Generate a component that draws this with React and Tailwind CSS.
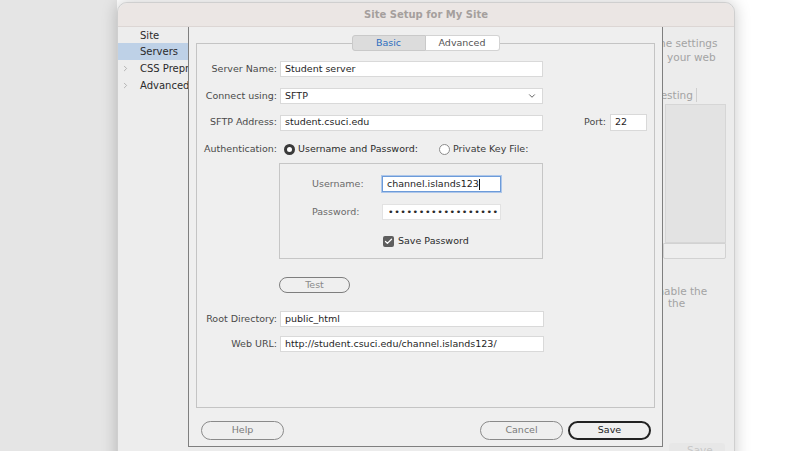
import { ChevronDown, ChevronRight, Check } from 'lucide-react'

const sidebarItems = [
  { label: 'Site' },
  { label: 'Servers', active: true },
  { label: 'CSS Preprocessors', expandable: true },
  { label: 'Advanced Settings', expandable: true },
]

function Field({ value, className = '' }) {
  return (
    <div className={`h-[16px] bg-white border border-[#d9d9d9] pl-[4px] flex items-center text-[#1e1e1e] ${className}`}>
      {value}
    </div>
  )
}

function Row({ label, children, className = '' }) {
  return (
    <div className={`flex items-center ${className}`}>
      <span className="w-[80px] shrink-0 text-right text-[#4a4a4a]">{label}</span>
      <div className="ml-[3px] flex items-center">{children}</div>
    </div>
  )
}

function Radio({ checked }) {
  return checked ? (
    <span className="w-[11px] h-[11px] rounded-full border-[3px] border-[#3a3a3a] bg-white shrink-0" />
  ) : (
    <span className="w-[11px] h-[11px] rounded-full border border-[#8c8c8c] bg-white shrink-0" />
  )
}

function PillButton({ children, primary, className = '' }) {
  return (
    <button
      className={`h-[19px] w-[83px] rounded-full flex items-center justify-center ${
        primary ? 'border-2 border-[#222] text-[#222]' : 'border border-[#8a8a8a] text-[#7a7a7a]'
      } ${className}`}
    >
      {children}
    </button>
  )
}

export default function App() {
  return (
    <div className="w-[800px] h-[451px] overflow-hidden bg-white flex font-['DejaVu_Sans',sans-serif] text-[9.5px]">
      {/* desktop behind the window */}
      <div className="w-[117px] shrink-0 h-full bg-[#e5e5e5]" />

      {/* Site Setup window */}
      <div className="relative z-10 w-[618px] shrink-0 h-[470px] mt-[2px] rounded-t-[10px] border border-[#cfcfcf] bg-[#ececec] flex flex-col shadow-[0_0_16px_rgba(0,0,0,0.22)]">
        <div className="h-[24px] shrink-0 rounded-t-[10px] bg-[#ebe6e4] border-b border-[#dcd6d4] flex items-center justify-center">
          <span className="font-bold text-[10px] text-[#a59f9d]">Site Setup for My Site</span>
        </div>

        <div className="flex">
          {/* category list */}
          <div className="w-[70px] shrink-0 overflow-hidden bg-[#ededed] text-[10px] text-[#2b2b2b]">
            {sidebarItems.map((item, i) => (
              <div
                key={item.label}
                className={`flex items-center whitespace-nowrap ${i === 0 ? 'h-[16px]' : 'h-[17px]'} ${
                  item.active ? 'bg-[#bed1e7]' : ''
                }`}
              >
                <span className="w-[22px] shrink-0 pl-[3px] text-[#a0a0a0]">
                  {item.expandable && <ChevronRight className="w-[9px] h-[9px]" strokeWidth={2} />}
                </span>
                {item.label}
              </div>
            ))}
          </div>

          {/* server sheet */}
          <div className="w-[475px] shrink-0 h-[420px] bg-[#efefef] border-x border-b border-[#7f7f7f] px-[7px] pt-[8px] flex flex-col">
            <div className="relative z-10 flex justify-center">
              <div className="h-[16px] w-[74px] flex items-center justify-center bg-[#dcdcdc] border border-[#c9c9c9] rounded-l-[3px] text-[#2f6fc0]">
                Basic
              </div>
              <div className="h-[16px] w-[74px] flex items-center justify-center bg-white border border-l-0 border-[#d3d3d3] rounded-r-[3px] text-[#555]">
                Advanced
              </div>
            </div>

            <div className="-mt-[8px] h-[365px] border border-[#c4c4c4] flex flex-col">
              <Row label="Server Name:" className="mt-[17px]">
                <Field value="Student server" className="w-[263px]" />
              </Row>
              <Row label="Connect using:" className="mt-[11px]">
                <div className="w-[263px] h-[16px] bg-white border border-[#d9d9d9] pl-[4px] pr-[5px] flex items-center justify-between text-[#1e1e1e]">
                  SFTP
                  <ChevronDown className="w-[10px] h-[10px] text-[#555]" strokeWidth={2.2} />
                </div>
              </Row>
              <Row label="SFTP Address:" className="mt-[10px]">
                <Field value="student.csuci.edu" className="w-[263px]" />
                <span className="ml-[41px] text-[#4a4a4a]">Port:</span>
                <Field value="22" className="ml-[4px] w-[37px] h-[17px]" />
              </Row>

              <Row label="Authentication:" className="mt-[12px] h-[12px]">
                <div className="flex items-center pl-[4px]">
                  <Radio checked />
                  <span className="ml-[3px] text-[#2b2b2b]">Username and Password:</span>
                  <span className="ml-[21px]" />
                  <Radio />
                  <span className="ml-[3px] text-[#3a3a3a]">Private Key File:</span>
                </div>
              </Row>

              {/* credentials group */}
              <div className="ml-[82px] mt-[8px] w-[264px] h-[96px] border border-[#c6c6c6] flex flex-col">
                <div className="flex items-center mt-[12px] ml-[32px]">
                  <span className="w-[70px] text-[#6a6a6a]">Username:</span>
                  <div className="w-[119px] h-[16px] bg-white border border-[#6c9bd9] shadow-[0_0_0_1px_rgba(120,165,230,0.55)] pl-[4px] flex items-center text-[#1e1e1e]">
                    channel.islands123
                    <span className="w-px h-[11px] bg-[#111]" />
                  </div>
                </div>
                <div className="flex items-center mt-[12px] ml-[32px]">
                  <span className="w-[70px] text-[#6a6a6a]">Password:</span>
                  <div className="w-[119px] h-[16px] bg-white border border-[#e2e2e2] pl-[5px] flex items-center overflow-hidden text-[#2a2a2a] text-[9.5px] tracking-[0.55px]">
                    ••••••••••••••••••
                  </div>
                </div>
                <div className="flex items-center mt-[14px] ml-[103px]">
                  <span className="w-[11px] h-[11px] rounded-[2px] bg-[#5e5e5e] flex items-center justify-center">
                    <Check className="w-[9px] h-[9px] text-white" strokeWidth={3.5} />
                  </span>
                  <span className="ml-[4px] text-[#2b2b2b]">Save Password</span>
                </div>
              </div>

              <button className="ml-[82px] mt-[18px] w-[71px] h-[16px] rounded-full border border-[#7e7e7e] text-[#8a8a8a] flex items-center justify-center">
                Test
              </button>

              <Row label="Root Directory:" className="mt-[18px]">
                <Field value="public_html" className="w-[264px]" />
              </Row>
              <Row label="Web URL:" className="mt-[9px]">
                <Field value="http://student.csuci.edu/channel.islands123/" className="w-[264px]" />
              </Row>
            </div>

            <div className="mt-[13px] flex items-center pl-[5px] pr-[4px]">
              <PillButton>Help</PillButton>
              <PillButton className="ml-auto">Cancel</PillButton>
              <PillButton primary className="ml-[5px]">Save</PillButton>
            </div>
          </div>

          {/* server list pane, mostly covered by the sheet */}
          <div className="w-[71px] shrink-0 overflow-hidden flex flex-col text-[10.5px] leading-[14px] text-[#a3a3a3] whitespace-nowrap">
            <span className="mt-[9px] -ml-[8px]">the settings</span>
            <span className="ml-[4px]">your web</span>
            <div className="mt-[23px] h-[15px] flex items-center -ml-[7px]">
              <span className="pr-[3px] border-r border-[#cfcfcf]">Testing</span>
            </div>
            <div className="mt-[2px] ml-[2px] w-[61px] h-[139px] bg-[#e3e3e3] border border-[#d6d6d6]" />
            <div className="w-[63px] h-[16px] bg-[#eeeeee] border border-[#d2d2d2] rounded-b-[2px]" />
            <span className="mt-[26px] -ml-[12px] leading-[12px]">enable the</span>
            <span className="ml-[5px] leading-[12px]">the</span>
            <div className="mt-[134px] ml-[6px] w-[56px] h-[12px] bg-[#e7e7e7] rounded-t-[3px] text-[#c8c8c8] pl-[18px]">Save</div>
          </div>
        </div>
      </div>

      <div className="flex-1 h-full bg-white" />
    </div>
  )
}
